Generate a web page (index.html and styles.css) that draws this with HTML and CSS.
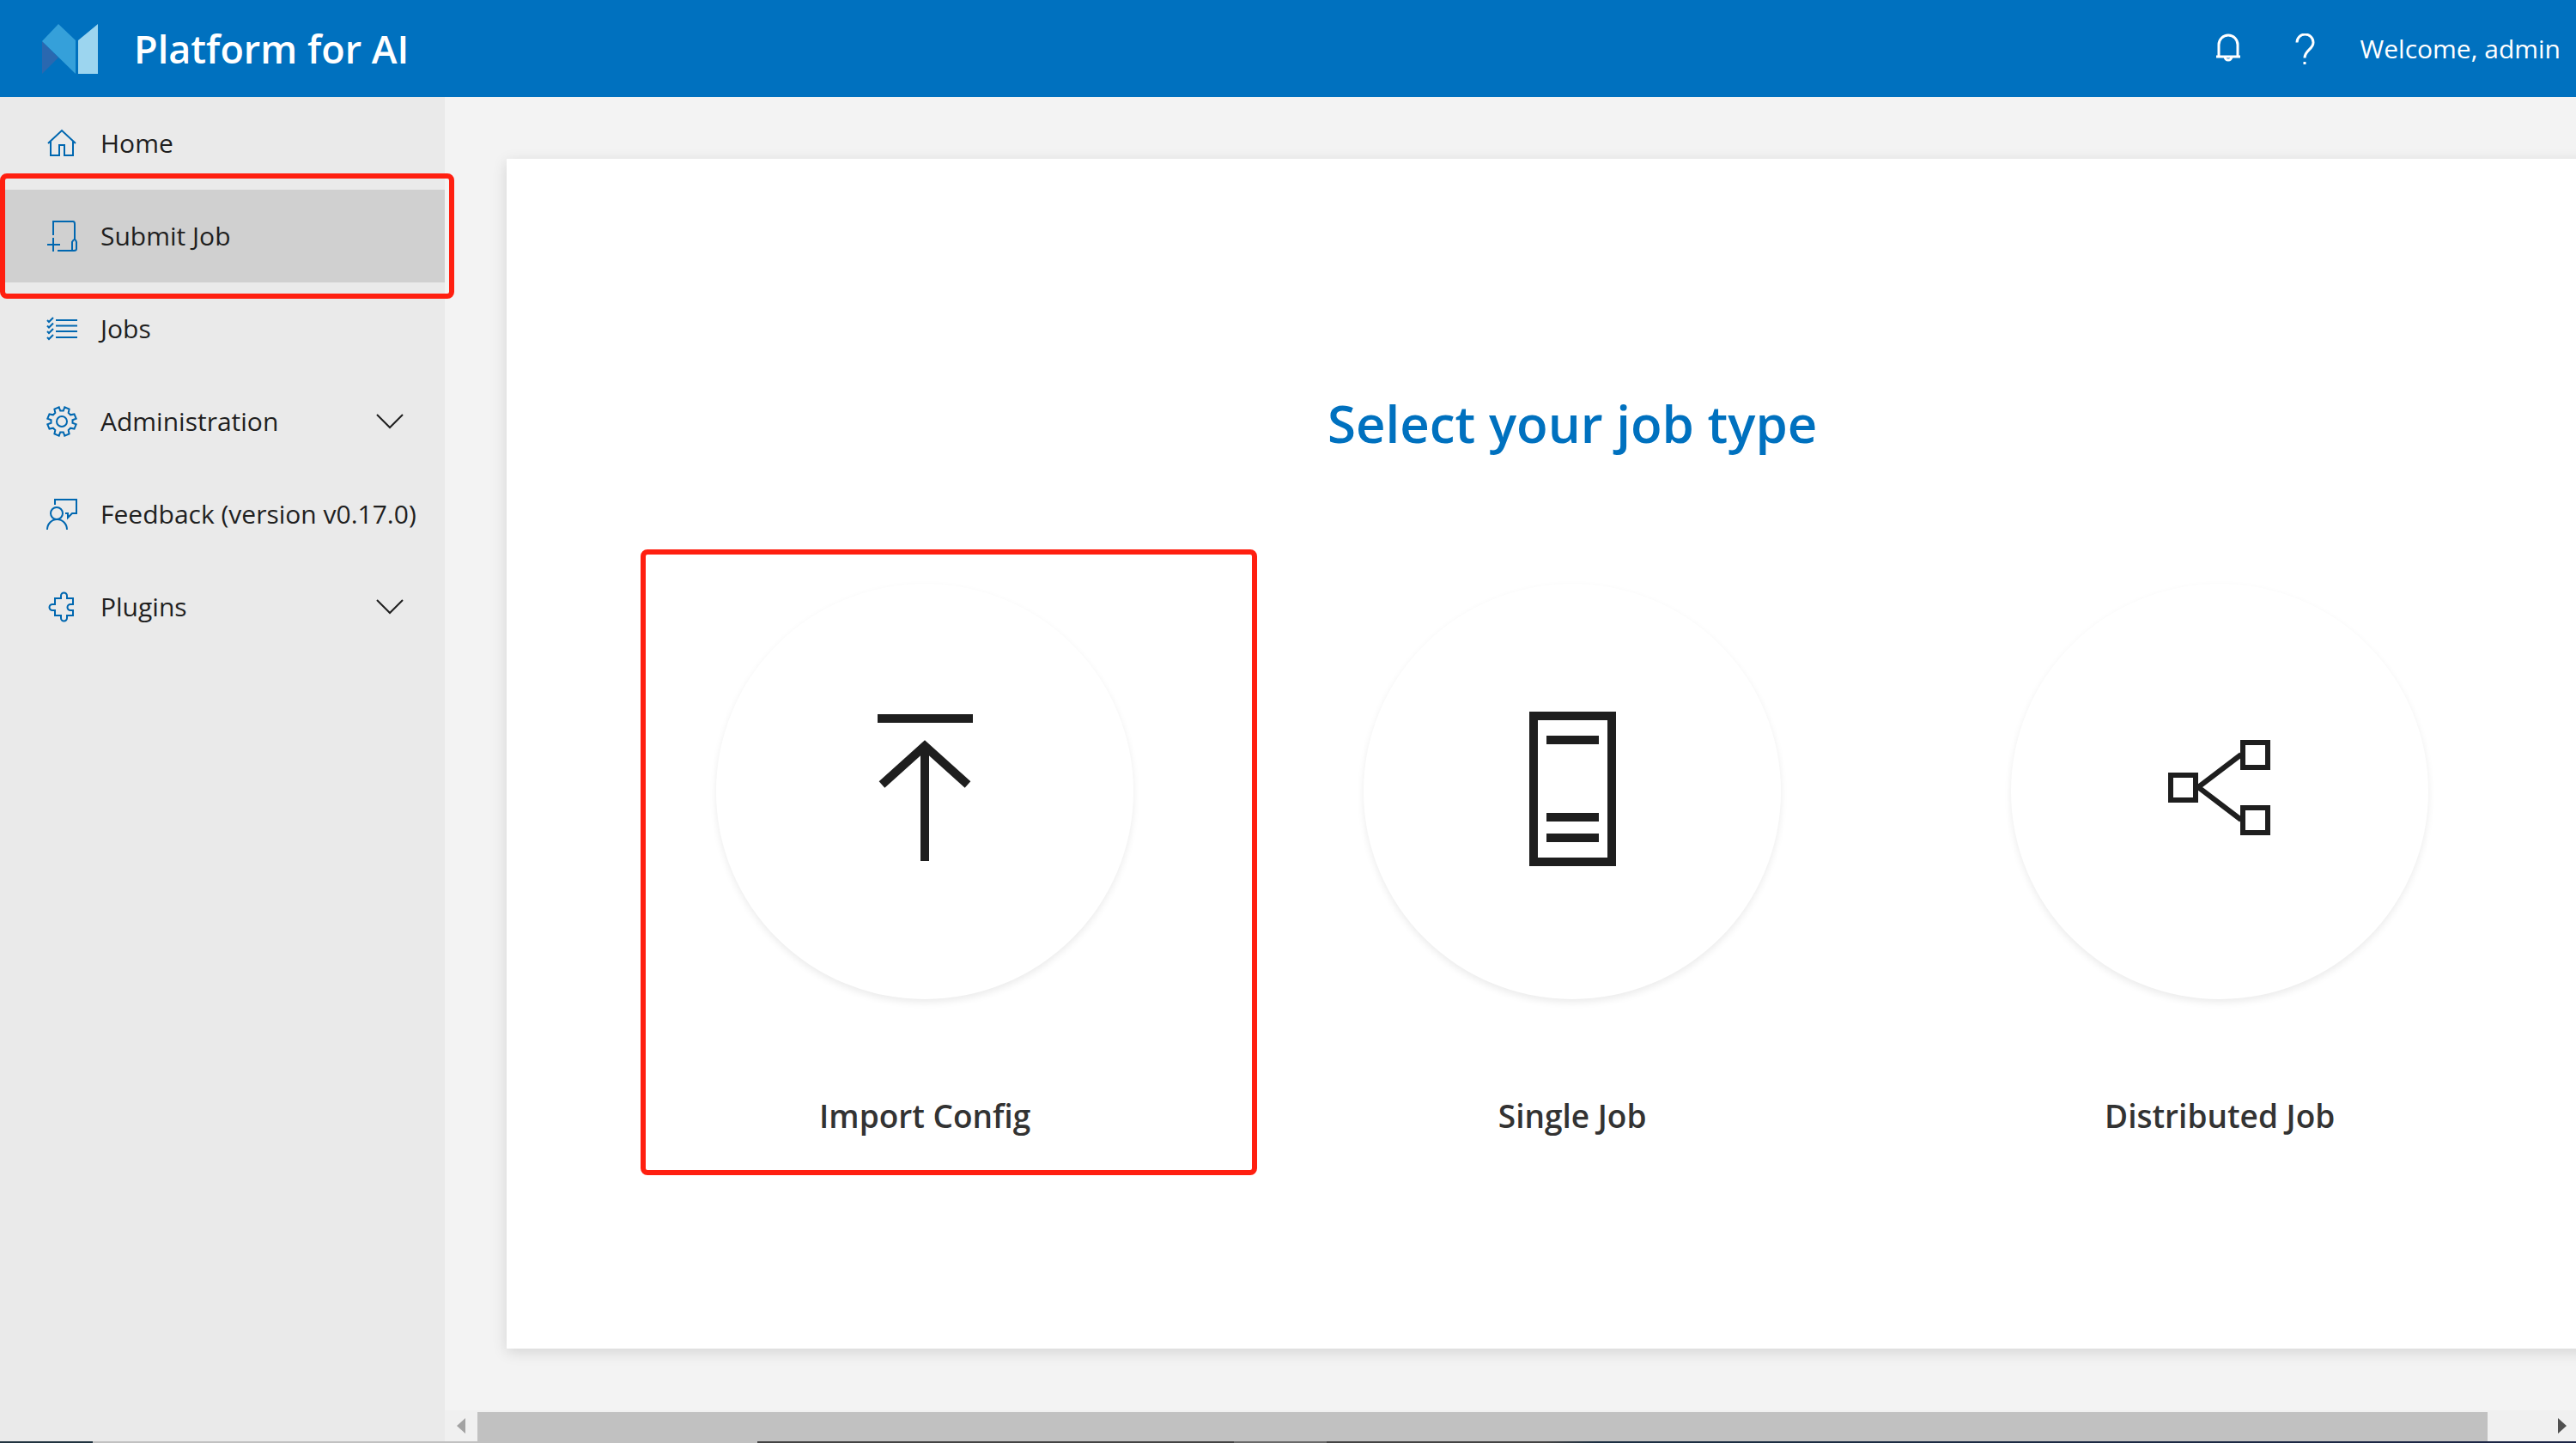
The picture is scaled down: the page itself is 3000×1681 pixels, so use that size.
FILE: index.html
```html
<!DOCTYPE html>
<html lang="en">
<head>
<meta charset="utf-8">
<title>Platform for AI</title>
<meta name="viewport" content="width=device-width, initial-scale=1">
<link rel="stylesheet" href="styles.css">
</head>
<body>
<header class="topbar">
  <a class="brand" href="#">
    <svg class="logo" viewBox="0 0 65 58" aria-hidden="true">
      <path fill="#2a68b0" d="M0 20 19 39 0 58z"/>
      <path fill="#35a0da" d="M19 0 39 19V58L0 20z"/>
      <path fill="#9cd5ef" d="M42 19 65 0V58H42z"/>
    </svg>
    <span>Platform for AI</span>
  </a>
  <div class="tools">
    <button class="tool" type="button" aria-label="Notifications">
      <svg class="icon" viewBox="0 0 36 36"><path d="M7 27V13a11 11 0 0 1 22 0v14M4 27h28M14 27a4 4 0 0 0 8 0"/></svg>
    </button>
    <button class="tool" type="button" aria-label="Help">
      <svg class="icon" viewBox="0 0 36 36"><path d="M9 10.500a9.500 9.500 0 0 1 19 0c0 8-10 9-10 18M18 33v3"/></svg>
    </button>
    <span class="welcome">Welcome, admin</span>
  </div>
</header>
<div class="body">
  <nav class="sidebar">
    <a class="item" href="#">
      <svg class="icon" viewBox="0 0 36 36"><path d="M2 18 18 3l16 15M5 16v16h10V20h6v12h10V16"/></svg>
      <span>Home</span>
    </a>
    <a class="item current marked" href="#" aria-current="page">
      <svg class="icon" viewBox="0 0 36 36"><path d="M8 17V1h23q2 0 2 3v18M1 28h15M8 20v16M13 35h20M30 35V25q3-6 5 0v8q0 2-3 2"/></svg>
      <span>Submit Job</span>
    </a>
    <a class="item" href="#">
      <svg class="icon" viewBox="0 0 36 36"><path d="M11 8h25M11 14.500h25M11 21h25M11 28h25M1 8l2 2 5-5M1 14.500l2 2 5-5M1 21l2 2 5-5M1 28l2 2 5-5"/></svg>
      <span>Jobs</span>
    </a>
    <button class="item" type="button">
      <svg class="icon" viewBox="0 0 36 36"><circle cx="18" cy="18" r="6"/><path d="M16.200 5.500 14.700 1.300 9.400 3.500 10.300 7.900 7.900 10.300 3.500 9.400 1.300 14.700 5.500 16.200V19.800L1.300 21.300 3.500 26.600 7.900 25.700 10.300 28.100 9.400 32.500 14.700 34.700 16.200 30.500H19.800L21.300 34.700 26.600 32.500 25.700 28.100 28.100 25.700 32.500 26.600 34.700 21.300 30.500 19.800V16.200L34.700 14.700 32.500 9.400 28.100 10.300 25.700 7.900 26.600 3.500 21.300 1.300 19.800 5.500z"/></svg>
      <span>Administration</span>
      <svg class="chevron" viewBox="0 0 32 18"><path d="M1 1 16 16 31 1"/></svg>
    </button>
    <a class="item" href="#">
      <svg class="icon" viewBox="0 0 36 36"><circle cx="12" cy="17" r="7"/><path d="M1 36a11.500 12 0 0 1 23 0M10 7V1h25v16h-5l-5 5v-5h-3"/></svg>
      <span>Feedback (version v0.17.0)</span>
    </a>
    <button class="item" type="button">
      <svg class="icon" viewBox="0 0 36 36"><path d="M10 8h7V5a3.500 3.500 0 0 1 7 0v3h7v7h-3a3 3 0 0 0 0 7h3v6h-7v3a3.500 3.500 0 0 1-7 0v-3h-7v-6H7a3.500 3.500 0 0 1 0-7h3z"/></svg>
      <span>Plugins</span>
      <svg class="chevron" viewBox="0 0 32 18"><path d="M1 1 16 16 31 1"/></svg>
    </button>
  </nav>
  <main class="main">
    <div class="viewport">
      <section class="card">
        <h1>Select your job type</h1>
        <div class="types">
          <button class="type marked" type="button">
            <span class="disc"><svg viewBox="0 0 216 216"><path d="M53 23H164M108 58V189M58 100 108 55l50 45"/></svg></span>
            <span>Import Config</span>
          </button>
          <button class="type" type="button">
            <span class="disc"><svg viewBox="0 0 216 216"><path d="M63 20h91v170H63zM78 48h61M78 138h61M78 162h61"/></svg></span>
            <span>Single Job</span>
          </button>
          <button class="type" type="button">
            <span class="disc"><svg class="thin" viewBox="0 0 216 216"><path d="M51 89h29v29H51zM135 51h29v29h-29zM135 127h29v29h-29zM133 65 83 103l50 38"/></svg></span>
            <span>Distributed Job</span>
          </button>
        </div>
      </section>
    </div>
    <div class="scrollbar" aria-hidden="true">
      <svg class="arrow" viewBox="0 0 10 18"><path fill="#a3a3a3" d="M10 0V18L0 9z"/></svg>
      <div class="track"><div class="thumb"></div></div>
      <svg class="arrow" viewBox="0 0 10 18"><path fill="#505050" d="M0 0V18L10 9z"/></svg>
    </div>
  </main>
</div>
<div class="edge"></div>
</body>
</html>
```
FILE: styles.css
```css
* { box-sizing: border-box; }
body {
  margin: 0;
  min-height: 100vh;
  display: flex;
  flex-direction: column;
  overflow: hidden;
  background: #f3f3f3;
  color: #1f1f1f;
  font: 30px/40px "Open Sans", "Noto Sans", sans-serif;
}
a { color: inherit; text-decoration: none; }
button { font: inherit; color: inherit; background: none; border: 0; padding: 0; cursor: pointer; }
svg { flex: none; fill: none; }

.topbar {
  height: 113px;
  padding: 0 18px 0 49px;
  display: flex;
  align-items: center;
  justify-content: space-between;
  background: #0071bf;
  color: #fff;
}
.brand { display: flex; align-items: center; gap: 42px; font-size: 45px; font-weight: 600; }
.logo { width: 65px; height: 58px; }
.tools { display: flex; align-items: center; }
.tool { display: flex; justify-content: center; width: 89px; }
.welcome { margin-left: 20px; }

.icon { width: 36px; height: 36px; stroke: currentColor; stroke-width: 2; }
.tool .icon { stroke-width: 3; }

.body { flex: 1; display: flex; }
.sidebar { flex: none; width: 518px; background: #eaeaea; }
.item {
  position: relative;
  width: 100%;
  height: 108px;
  padding: 0 48px 0 54px;
  display: flex;
  align-items: center;
  gap: 27px;
  white-space: nowrap;
}
.item .icon { color: #0067b0; }
.current { background: #d0d0d0; }
.chevron { width: 32px; height: 18px; margin-left: auto; stroke: currentColor; stroke-width: 2; }

.marked::after {
  content: "";
  position: absolute;
  border: 6px solid #ff1f10;
  border-radius: 8px;
  pointer-events: none;
}
.item.marked::after { inset: -19px -11px -19px 0; z-index: 1; }

.main { flex: 1; min-width: 0; display: flex; flex-direction: column; }
.viewport { flex: 1; display: flex; overflow: hidden; padding: 72px 0 72px 72px; }
.card {
  flex: none;
  width: 103%;
  padding: 260px 0 0;
  background: #fff;
  box-shadow: 0 4px 16px rgba(0, 0, 0, .13);
}
h1 { margin: 0; font-size: 60px; line-height: 96px; font-weight: 600; color: #0071bf; text-align: center; }
.types { display: flex; justify-content: center; gap: 268px; margin-top: 139px; }
.type {
  position: relative;
  flex: none;
  width: 486px;
  display: flex;
  flex-direction: column;
  align-items: center;
  gap: 116px;
  font-size: 37px;
  font-weight: 600;
  color: #333;
}
.type.marked::after { inset: -40px -144px -49px -88px; }
.disc {
  width: 486px;
  height: 484px;
  border-radius: 50%;
  display: flex;
  align-items: center;
  justify-content: center;
  box-shadow: 0 4px 8px rgba(0, 0, 0, .08);
}
.disc svg { width: 216px; height: 216px; stroke: #1e1e1e; stroke-width: 10; }
.disc .thin { stroke-width: 6; }

.scrollbar { height: 36px; padding: 0 11px 0 14px; display: flex; align-items: center; gap: 14px; background: #f0f0f0; }
.arrow { width: 10px; height: 18px; }
.track { flex: 1; align-self: stretch; padding: 2px 68px 0 0; }
.thumb { height: 100%; background: #c1c1c1; }
.edge {
  height: 2px;
  background: linear-gradient(90deg, #213440 0 3.6%, #c1c1c1 3.6% 29.4%, #444 29.4% 47.9%, #6a6a6a 47.9% 51.5%, #444 51.5% 60%, #1c2f42 62%, #1c2545);
}
```
